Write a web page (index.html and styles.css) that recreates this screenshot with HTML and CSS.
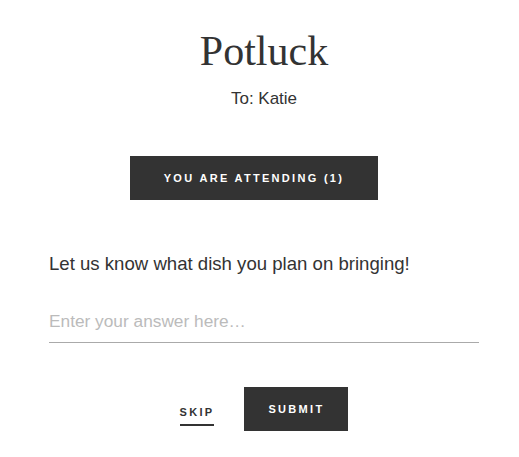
FILE: index.html
```html
<!DOCTYPE html>
<html lang="en">
<head>
    <meta charset="UTF-8">
    <meta name="viewport" content="width=device-width, initial-scale=1.0">
    <title>Potluck</title>
    <link rel="stylesheet" href="styles.css">
</head>
<body>

<main class="card">
    <header class="head">
        <h1 class="title">Potluck</h1>
        <p class="recipient">To: Katie</p>
    </header>

    <div class="status-row">
        <button class="btn btn-status">You are attending (1)</button>
    </div>

    <section class="question">
        <label class="question-label" for="answer">Let us know what dish you plan on bringing!</label>
        <input id="answer" class="answer" type="text" placeholder="Enter your answer here…">
    </section>

    <div class="actions">
        <button class="link-skip">Skip</button>
        <button class="btn btn-submit">Submit</button>
    </div>
</main>

</body>
</html>
```

FILE: styles.css
```css
body {
    margin: 0;
    padding: 0;
    background-color: #ffffff;
    color: #333333;
    font-family: 'Liberation Sans', Arial, sans-serif;
}

.card {
    width: 430px;
    padding: 28px 40px 0 49px;
}

.head {
    text-align: center;
}

.title {
    margin: 0;
    font-family: 'Liberation Serif', 'Times New Roman', serif;
    font-weight: normal;
    font-size: 42px;
    line-height: 46px;
    color: #333333;
}

.recipient {
    margin: 14px 0 0;
    font-size: 17px;
    line-height: 22px;
}

.btn {
    height: 44px;
    border: none;
    background-color: #333333;
    color: #ffffff;
    font-family: 'Liberation Sans', Arial, sans-serif;
    font-weight: bold;
    font-size: 11px;
    letter-spacing: 2.3px;
    text-transform: uppercase;
    cursor: pointer;
}

.status-row {
    margin-top: 46px;
    padding-left: 81px; /* кнопка немного левее центра */
}

.btn-status {
    width: 248px;
}

.question {
    margin-top: 52px;
}

.question-label {
    display: block;
    font-size: 18.6px;
    line-height: 24px;
    color: #333333;
}

.answer {
    display: block;
    box-sizing: border-box;
    width: 100%;
    margin-top: 34px;
    padding: 0 0 10px;
    border: none;
    border-bottom: 1px solid #aaaaaa;
    font-family: 'Liberation Sans', Arial, sans-serif;
    font-size: 17.3px;
    line-height: 22px;
    color: #333333;
    outline: none;
}

.answer::placeholder {
    color: #bbbbbb;
}

.actions {
    display: flex;
    justify-content: center;
    align-items: center;
    gap: 30px;
    margin-top: 44px;
}

.link-skip {
    padding: 0 0 6px;
    border: none;
    border-bottom: 2px solid #333333;
    background: none;
    color: #333333;
    font-family: 'Liberation Sans', Arial, sans-serif;
    font-weight: bold;
    font-size: 11px;
    letter-spacing: 2.3px;
    text-transform: uppercase;
    margin-top: 14px;
    cursor: pointer;
}

.btn-submit {
    width: 104px;
}
```
